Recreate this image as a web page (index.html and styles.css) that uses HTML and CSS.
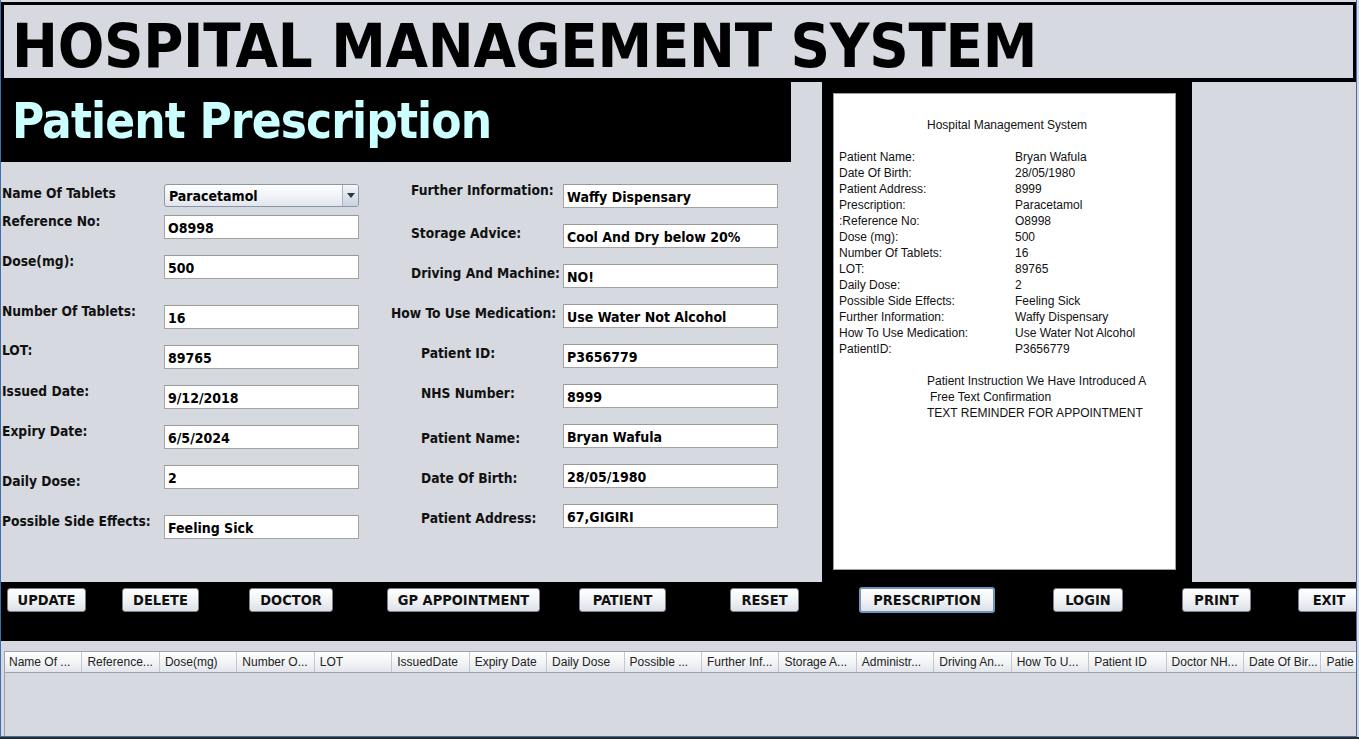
FILE: index.html
```html
<!DOCTYPE html>
<html>
<head>
<meta charset="utf-8">
<title>Hospital Management System</title>
<link rel="stylesheet" href="styles.css">
</head>
<body>
<div class="app">
  <header class="title-bar">
    <h1 class="title">HOSPITAL MANAGEMENT SYSTEM</h1>
  </header>

  <div class="main">
    <section class="left">
      <div class="heading"><h2>Patient Prescription</h2></div>
      <div class="form">
        <div class="col col-left">
          <label class="lbl lbl-first">Name Of Tablets</label>
          <div class="combo"><span class="combo-text">Paracetamol</span><span class="combo-btn"><svg width="8" height="5" viewBox="0 0 8 5"><path d="M0 0h8L4 5z" fill="#2b3442"/></svg></span></div>
          <label class="lbl">Reference No:</label>
          <div class="field">O8998</div>
          <label class="lbl">Dose(mg):</label>
          <div class="field">500</div>
          <label class="lbl">Number Of Tablets:</label>
          <div class="field">16</div>
          <label class="lbl lbl-up">LOT:</label>
          <div class="field">89765</div>
          <label class="lbl">Issued Date:</label>
          <div class="field">9/12/2018</div>
          <label class="lbl">Expiry Date:</label>
          <div class="field">6/5/2024</div>
          <label class="lbl lbl-low">Daily Dose:</label>
          <div class="field">2</div>
          <label class="lbl">Possible Side Effects:</label>
          <div class="field">Feeling Sick</div>
        </div>
        <div class="col col-right">
          <label class="lbl ind-a lbl-up2">Further Information:</label>
          <div class="field">Waffy Dispensary</div>
          <label class="lbl ind-a">Storage Advice:</label>
          <div class="field">Cool And Dry below 20%</div>
          <label class="lbl ind-a">Driving And Machine:</label>
          <div class="field">NO!</div>
          <label class="lbl ind-b">How To Use Medication:</label>
          <div class="field">Use Water Not Alcohol</div>
          <label class="lbl ind-c">Patient ID:</label>
          <div class="field">P3656779</div>
          <label class="lbl ind-c">NHS Number:</label>
          <div class="field">8999</div>
          <label class="lbl ind-c lbl-down">Patient Name:</label>
          <div class="field">Bryan Wafula</div>
          <label class="lbl ind-c lbl-down">Date Of Birth:</label>
          <div class="field">28/05/1980</div>
          <label class="lbl ind-c lbl-down">Patient Address:</label>
          <div class="field">67,GIGIRI</div>
        </div>
      </div>
    </section>

    <section class="receipt-wrap">
      <div class="paper">
        <div class="paper-title">Hospital Management System</div>
        <dl class="rows">
          <dt>Patient Name:</dt><dd>Bryan Wafula</dd>
          <dt>Date Of Birth:</dt><dd>28/05/1980</dd>
          <dt>Patient Address:</dt><dd>8999</dd>
          <dt>Prescription:</dt><dd>Paracetamol</dd>
          <dt>:Reference No:</dt><dd>O8998</dd>
          <dt>Dose (mg):</dt><dd>500</dd>
          <dt>Number Of Tablets:</dt><dd>16</dd>
          <dt>LOT:</dt><dd>89765</dd>
          <dt>Daily Dose:</dt><dd>2</dd>
          <dt>Possible Side Effects:</dt><dd>Feeling Sick</dd>
          <dt>Further Information:</dt><dd>Waffy Dispensary</dd>
          <dt>How To Use Medication:</dt><dd>Use Water Not Alcohol</dd>
          <dt>PatientID:</dt><dd>P3656779</dd>
        </dl>
        <div class="note">
          <div>Patient Instruction We Have Introduced A</div>
          <div class="note-indent">Free Text Confirmation</div>
          <div>TEXT REMINDER FOR APPOINTMENT</div>
        </div>
      </div>
    </section>
  </div>

  <nav class="buttons">
    <div class="cell"><button class="btn w-update">UPDATE</button></div>
    <div class="cell"><button class="btn w-delete">DELETE</button></div>
    <div class="cell"><button class="btn w-doctor">DOCTOR</button></div>
    <div class="cell"><button class="btn w-gp">GP APPOINTMENT</button></div>
    <div class="cell"><button class="btn w-patient">PATIENT</button></div>
    <div class="cell"><button class="btn w-reset">RESET</button></div>
    <div class="cell"><button class="btn btn-focus w-presc">PRESCRIPTION</button></div>
    <div class="cell"><button class="btn w-login">LOGIN</button></div>
    <div class="cell"><button class="btn w-print">PRINT</button></div>
    <div class="cell"><button class="btn w-exit">EXIT</button></div>
  </nav>

  <div class="table-area">
    <div class="table">
      <div class="thead">
        <div class="th">Name Of ...</div>
        <div class="th">Reference...</div>
        <div class="th">Dose(mg)</div>
        <div class="th">Number O...</div>
        <div class="th">LOT</div>
        <div class="th">IssuedDate</div>
        <div class="th">Expiry Date</div>
        <div class="th">Daily Dose</div>
        <div class="th">Possible ...</div>
        <div class="th">Further Inf...</div>
        <div class="th">Storage A...</div>
        <div class="th">Administr...</div>
        <div class="th">Driving An...</div>
        <div class="th">How To U...</div>
        <div class="th">Patient ID</div>
        <div class="th">Doctor NH...</div>
        <div class="th">Date Of Bir...</div>
        <div class="th th-last">Patie</div>
      </div>
      <div class="tbody"></div>
    </div>
  </div>
</div>
<div class="taskbar"></div>
</body>
</html>
```

FILE: styles.css
```css
* { box-sizing: border-box; }

html, body {
  margin: 0;
  padding: 0;
  background: #d6d9df;
  overflow: hidden;
}

body {
  width: 1359px;
  height: 739px;
  font-family: "DejaVu Sans Condensed", "DejaVu Sans", sans-serif;
  color: #000;
}

.app {
  width: 1357px;
  height: 737px;
  border-left: 1px solid #3c6fb0;
  border-right: 1px solid #3c6fb0;
  border-bottom: 1px solid #3c6fb0;
  padding-top: 2px;
  background: #d6d9df;
  overflow: hidden;
}

/* ---------- title ---------- */
.title-bar {
  height: 80px;
  border-top: 3px solid #000;
  border-left: 3px solid #000;
  border-right: 3px solid #000;
  border-bottom: 4px solid #000;
  background: #d6d9df;
  padding-left: 8px;
  padding-top: 9px;
}

.title {
  margin: 0;
  font-family: "DejaVu Sans Condensed", "DejaVu Sans", sans-serif;
  font-weight: bold;
  font-size: 61px;
  line-height: 64px;
  letter-spacing: -0.3px;
  white-space: nowrap;
  color: #000;
}

/* ---------- main ---------- */
.main {
  display: flex;
  height: 500px;
}

.left {
  width: 820px;
  flex: none;
}

.heading {
  width: 790px;
  height: 80px;
  background: #000;
  padding-left: 11px;
}

.heading h2 {
  margin: 0;
  color: #ccffff;
  font-weight: bold;
  font-size: 49px;
  letter-spacing: -0.9px;
  line-height: 80px;
  white-space: nowrap;
}

.form {
  display: flex;
  padding-top: 22px;
}

.col {
  display: grid;
  align-items: start;
}

.col-left {
  width: 380px;
  padding-left: 1px;
  grid-template-columns: 162px 195px;
  grid-template-rows: 31px 40px 50px 40px 40px 40px 40px 50px 24px;
}

.col-right {
  grid-template-columns: 182px 215px;
  grid-template-rows: repeat(9, 40px);
}

.lbl {
  font-weight: bold;
  font-size: 13.7px;
  line-height: 16px;
  white-space: nowrap;
  margin-top: -2px;
  color: #111;
}

.lbl-first { margin-top: 1px; }
.lbl-up { margin-top: -3px; }
.lbl-low { margin-top: 8px; }

.col-right .lbl { margin-top: 1px; }
.col-right .lbl-up2 { margin-top: -2px; }
.col-right .lbl-down { margin-top: 6px; }
.ind-a { padding-left: 30px; }
.ind-b { padding-left: 10px; }
.ind-c { padding-left: 40px; }

.field {
  height: 24px;
  background: #fff;
  border: 1px solid #a3a3a3;
  border-top-color: #9a9a9a;
  padding-left: 3px;
  font-weight: bold;
  font-size: 14px;
  line-height: 22px;
  padding-top: 1px;
  white-space: nowrap;
  color: #000;
}

.combo {
  height: 23px;
  display: flex;
  border: 1px solid #8b96a6;
  border-radius: 3px;
  background: linear-gradient(#ffffff, #eef1f5 60%, #e2e6ec);
  overflow: hidden;
}

.combo-text {
  flex: 1;
  padding-left: 4px;
  font-weight: bold;
  font-size: 14px;
  line-height: 22px;
}

.combo-btn {
  width: 16px;
  border-left: 1px solid #a9b3c1;
  background: linear-gradient(#f4f6f9, #c9d2de);
  display: flex;
  align-items: center;
  justify-content: center;
}

/* ---------- receipt ---------- */
.receipt-wrap {
  width: 370px;
  height: 500px;
  flex: none;
  margin-left: 1px;
  background: #000;
  padding: 11px 15px 12px 11px;
}

.paper {
  width: 343px;
  height: 477px;
  background: #fff;
  border: 1px solid #9aa0a8;
  padding: 23px 0 0 5px;
  font-family: "Liberation Sans", Arial, sans-serif;
  font-size: 12px;
  line-height: 16px;
  color: #111;
}

.paper-title {
  padding-left: 88px;
  margin-bottom: 16px;
}

.rows {
  display: grid;
  grid-template-columns: 176px 1fr;
  margin: 0;
}

.rows dt, .rows dd {
  margin: 0;
  white-space: nowrap;
}

.note {
  padding-left: 88px;
  margin-top: 16px;
}

.note-indent { padding-left: 3px; }

/* ---------- buttons ---------- */
.buttons {
  height: 59px;
  background: #000;
  display: grid;
  grid-template-columns: 115px 127px 138px 192px 151px 129px 194px 129px 116px 1fr;
  padding-left: 6px;
  padding-top: 6px;
  align-items: start;
}

.cell { display: flex; }

.btn {
  height: 24px;
  border: 1px solid #7d828a;
  border-radius: 3px;
  background: linear-gradient(#ffffff, #f2f4f7 45%, #dde1e7);
  font-family: "DejaVu Sans Condensed", "DejaVu Sans", sans-serif;
  font-weight: bold;
  font-size: 14.5px;
  color: #111;
  padding: 0;
  white-space: nowrap;
}

.btn-focus {
  border: 2px solid #6f94bd;
  height: 26px;
  margin-top: -1px;
}

.w-update { width: 79px; }
.w-delete { width: 77px; }
.w-doctor { width: 84px; }
.w-gp { width: 153px; }
.w-patient { width: 87px; }
.w-reset { width: 69px; }
.w-presc { width: 136px; }
.w-login { width: 70px; }
.w-print { width: 69px; }
.w-exit { width: 62px; }

/* ---------- table ---------- */
.table-area {
  height: 95px;
  padding: 10px 0 0 3px;
  background: #d6d9df;
}

.table {
  height: 85px;
  border-left: 1px solid #9ca3ad;
  border-top: 1px solid #9ca3ad;
  overflow: hidden;
}

.thead {
  display: grid;
  grid-template-columns: repeat(17, 77.45px) 1fr;
  height: 21px;
  border-bottom: 1px solid #9ca3ad;
  background: linear-gradient(#ffffff, #f3f4f6 50%, #e2e5ea);
}

.th {
  font-family: "Liberation Sans", Arial, sans-serif;
  font-size: 12px;
  line-height: 20px;
  padding-left: 5px;
  color: #222;
  white-space: nowrap;
  overflow: hidden;
  border-right: 1px solid #c3c8d0;
}

.th:first-child { padding-left: 4px; }
.th-last { border-right: 0; }

.tbody {
  height: 63px;
  background: #d6d9df;
}

.taskbar {
  height: 2px;
  background: #2a2a2a;
}
```
